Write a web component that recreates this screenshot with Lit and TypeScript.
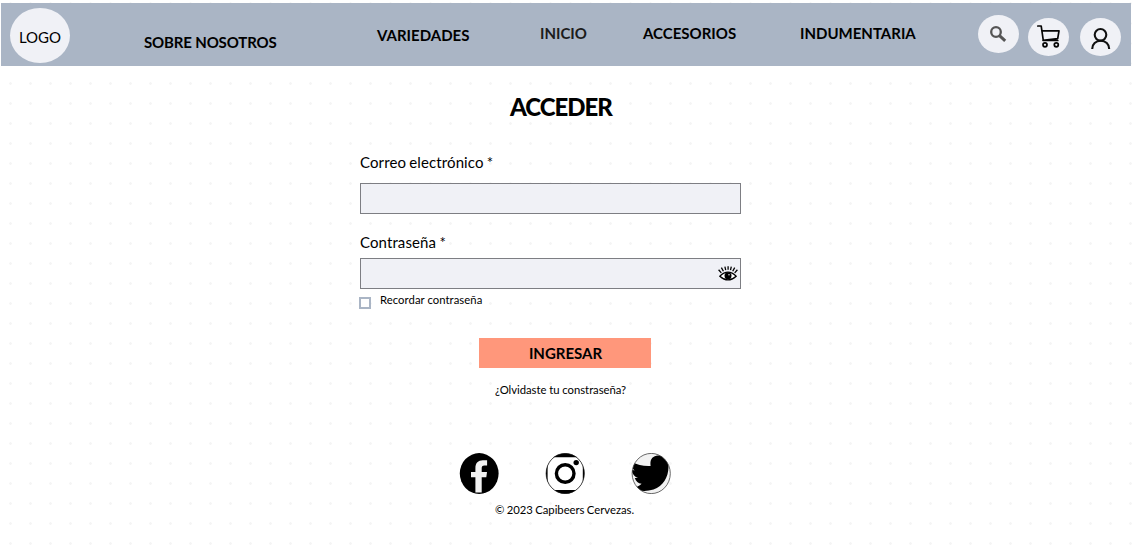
import { LitElement, html, css, svg } from "lit";
import { customElement } from "lit/decorators.js";

@customElement("site-header")
class SiteHeader extends LitElement {
  static styles = css`
    :host { display: block; }
    .bar {
      display: flex;
      align-items: flex-start;
      box-sizing: border-box;
      width: 1130px;
      height: 63px;
      margin-left: 0.5px;
      background: #aab5c5;
      font: 700 15px/20px Lato, sans-serif;
      color: #000;
      white-space: nowrap;
    }
    .logo {
      width: 60px;
      height: 55px;
      margin: 5px 0 0 9.5px;
      border-radius: 50%;
      background: #f0f1f6;
      font-weight: 400;
      line-height: 59px;
      text-align: center;
    }
    .link { margin-top: 20px; flex: none; }
    .about { width: 133px; margin: 29px 0 0 74px; letter-spacing: -0.15px; }
    .kinds { width: 93px; margin: 22px 0 0 100px; }
    .home { width: 48px; margin-left: 70px; color: #1c1c1c; }
    .extras { width: 94px; margin-left: 55px; }
    .wear { width: 116px; margin-left: 63px; }
    .round {
      flex: none;
      width: 41px;
      height: 38px;
      margin-top: 15px;
      border-radius: 50%;
      background: #f0f1f6;
    }
    .search { margin: 12px 0 0 62px; }
    .cart { margin-left: 9px; }
    .user { margin-left: 11.4px; }
    svg { display: block; }
  `;
  render() {
    return html`<header class="bar">
      <div class="logo">LOGO</div>
      <a class="link about">SOBRE NOSOTROS</a>
      <a class="link kinds">VARIEDADES</a>
      <a class="link home">INICIO</a>
      <a class="link extras">ACCESORIOS</a>
      <a class="link wear">INDUMENTARIA</a>
      <div class="round search">
        <svg width="41" height="38" viewBox="0 0 41 38" fill="none" stroke="#555">
          <circle cx="18" cy="17" r="4.8" stroke-width="2.3" />
          <path d="M21.5 20.6 27.2 25.9" stroke-width="3" />
        </svg>
      </div>
      <div class="round cart">
        <svg width="41" height="38" viewBox="0 0 41 38" fill="none" stroke="#050505" stroke-width="1.7" stroke-linejoin="round" stroke-linecap="round">
          <path d="M9.8 8H13.2L15.3 22.5H29.8M13.8 12.8H31L29.7 20.6 15 22.3" />
          <circle cx="17" cy="26.8" r="2" />
          <circle cx="28.3" cy="26.8" r="2" />
        </svg>
      </div>
      <div class="round user">
        <svg width="41" height="38" viewBox="0 0 41 38" fill="none" stroke="#111" stroke-width="2.1">
          <circle cx="20.5" cy="16.8" r="5.8" />
          <path d="M12.2 31C12.2 26 15.8 22.8 20.7 22.8S29.2 26 29.2 31" />
        </svg>
      </div>
    </header>`;
  }
}

@customElement("login-form")
class LoginForm extends LitElement {
  static styles = css`
    :host { display: block; width: 381px; margin-left: 360px; font: 400 15px/20px Lato, sans-serif; color: #000; }
    .title { margin: 0; padding: 26px 0 0 150px; font-size: 24px; line-height: 30px; font-weight: 900; letter-spacing: -1px; white-space: nowrap; }
    .label { display: block; }
    .mail { margin-top: 30px; letter-spacing: 0.1px; word-spacing: -0.6px; }
    .pass { margin-top: 18px; letter-spacing: 0.1px; word-spacing: -0.6px; }
    .field {
      display: flex;
      align-items: center;
      justify-content: flex-end;
      box-sizing: border-box;
      height: 31px;
      border: 1px solid #7d7e83;
      background: #f0f1f6;
      padding-right: 2px;
    }
    .mail-field { margin-top: 11px; }
    .pass-field { margin-top: 6px; }
    .remember { display: flex; margin-top: 3px; font-size: 11.3px; line-height: 16px; height: 20px; letter-spacing: 0.05px; }
    .box { box-sizing: border-box; width: 12px; height: 12px; margin: 5px 9px 0 -1px; border: 2px solid #aab5c5; background: #fff; }
    .submit { width: 172px; height: 30px; margin: 26px 0 0 119px; padding-left: 1px; box-sizing: border-box; background: #ff977b; font-weight: 700; line-height: 30px; text-align: center; }
    .forgot { margin: 14px 0 0 135px; font-size: 11.3px; line-height: 16px; white-space: nowrap; letter-spacing: -0.03px; }
  `;
  render() {
    return html`
      <h1 class="title">ACCEDER</h1>
      <label class="label mail">Correo electrónico *</label>
      <div class="field mail-field"></div>
      <label class="label pass">Contraseña *</label>
      <div class="field pass-field">
        <svg width="20" height="18" viewBox="0 0 20 18" fill="none" stroke="#000">
          <path d="M1.8 11.2Q10 3.2 18.2 11.2 10 18.6 1.8 11.2Z" stroke-width="1.2" fill="#fff" />
          <circle cx="10" cy="10.8" r="3.5" fill="#000" stroke="none" />
          <path d="M.6 4.8 3.3 7.9M3.4 2.6 5.4 6.2M6.9 1.6 7.7 5.2M10.1 1.2V4.8M13.3 1.6 12.5 5.2M16.7 2.6 14.7 6.2M19.4 4.8 16.7 7.9" stroke-width="1.3" />
          <circle cx="11" cy="9.7" r=".7" fill="#fff" stroke="none" />
        </svg>
      </div>
      <div class="remember"><span class="box"></span><span>Recordar contraseña</span></div>
      <div class="submit">INGRESAR</div>
      <div class="forgot">¿Olvidaste tu constraseña?</div>
    `;
  }
}

@customElement("site-footer")
class SiteFooter extends LitElement {
  static styles = css`
    :host { display: block; padding: 54.5px 0 0 459px; font: 400 11.3px/16px Lato, sans-serif; color: #000; }
    .social { display: flex; gap: 46px; }
    .copy { margin: 8.5px 0 0 36px; white-space: nowrap; letter-spacing: -0.02px; word-spacing: -0.5px; }
    svg { display: block; }
  `;
  render() {
    const clip = (id: string) => svg`<clipPath id=${id}><ellipse cx="20.2" cy="20.5" rx="19.2" ry="20.2" /></clipPath>`;
    return html`
      <div class="social">
        <svg width="40" height="41" viewBox="0 0 40 41">
          <ellipse cx="20.2" cy="20.5" rx="19.4" ry="20.4" />
          <path d="M16.4 39.5V24.2H12V18.9H16.4V15.2C16.4 10 19.2 7.3 23.8 7.3H28.1V12.5H25.4C23.2 12.5 22.7 13.5 22.7 15.4V18.9H28L27.3 24.2H22.7V39.5Z" fill="#f3f3f3" />
        </svg>
        <svg width="40" height="41" viewBox="0 0 40 41">
          ${clip("lens")}
          <g clip-path="url(#lens)">
            <path d="M0 0H40V41H0Z" />
            <rect x="2.6" y="4.3" width="35.2" height="32.7" rx="6" fill="#fff" />
          </g>
          <circle cx="20.2" cy="20.5" r="8.8" fill="none" stroke="#000" stroke-width="3.4" />
          <circle cx="31.2" cy="9.6" r="2.7" />
          <ellipse cx="20.2" cy="20.5" rx="19.1" ry="20.1" fill="none" stroke="#111" stroke-width=".7" />
        </svg>
        <svg width="40" height="41" viewBox="0 0 40 41">
          ${clip("bird")}
          <g clip-path="url(#bird)">
            <path d="M0 0H40V41H0Z" fill="#f2f2f2" />
            <path d="M0 8.5C6 11.8 12 13.4 19.6 13 18.6 6.5 21.5 2.8 27 2.4 30 2.2 33 3.4 35 5.8L40 4 37.2 10.2C38.8 21 33.5 33 22.5 36.6 14 39 6 38 0 34.5 5 34.6 8.2 33.2 10.6 30.8 7.2 30.6 4.8 28.6 3.8 25.1L7 24.9C3.2 23.7 1 20.8 .6 16.6L3.6 17.6C1 15.6 0 12.6 0 8.5Z" />
          </g>
          <ellipse cx="20.2" cy="20.5" rx="19.1" ry="20.1" fill="none" stroke="#444" stroke-width=".8" />
        </svg>
      </div>
      <div class="copy">© 2023 Capibeers Cervezas.</div>
    `;
  }
}

@customElement("app-root")
class AppRoot extends LitElement {
  static styles = css`
    :host {
      display: block;
      box-sizing: border-box;
      width: 1133px;
      height: 553px;
      padding-top: 3px;
      overflow: hidden;
      background: radial-gradient(circle at 10.5px 3.5px, #f5f5f5 0 1px, transparent 1.6px) 0 0 / 20px 20px #fff;
    }
  `;
  render() {
    return html`<site-header></site-header><login-form></login-form><site-footer></site-footer>`;
  }
}
